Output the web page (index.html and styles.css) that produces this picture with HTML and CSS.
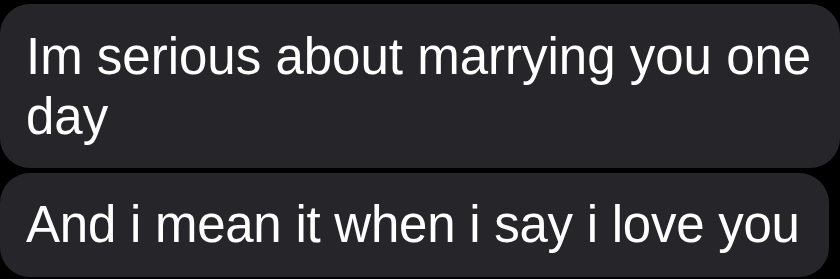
FILE: index.html
```html
<!DOCTYPE html>
<html>
<head>
<meta charset="utf-8">
<link rel="stylesheet" href="styles.css">
</head>
<body>
<div class="thread">
  <div class="bubble first">Im serious about marrying you one day</div>
  <div class="bubble second">And i mean it when i say i love you</div>
</div>
</body>
</html>
```
FILE: styles.css
```css
html, body {
  margin: 0;
  padding: 0;
  background: #000;
}
.thread {
  display: flex;
  flex-direction: column;
  align-items: flex-start;
  gap: 5px;
  padding-top: 4px;
  width: 840px;
  overflow: hidden;
}
.bubble {
  background: #262529;
  color: #fff;
  font-family: "Liberation Sans", Arial, sans-serif;
  font-size: 51px;
  line-height: 60px;
  box-sizing: border-box;
  border-radius: 30px;
}
.first {
  width: 840px;
  height: 164px;
  padding: 23px 20px 0 26px;
}
.second {
  width: 829px;
  height: 104px;
  padding: 22px 20px 0 26px;
  letter-spacing: -0.25px;
}
```
